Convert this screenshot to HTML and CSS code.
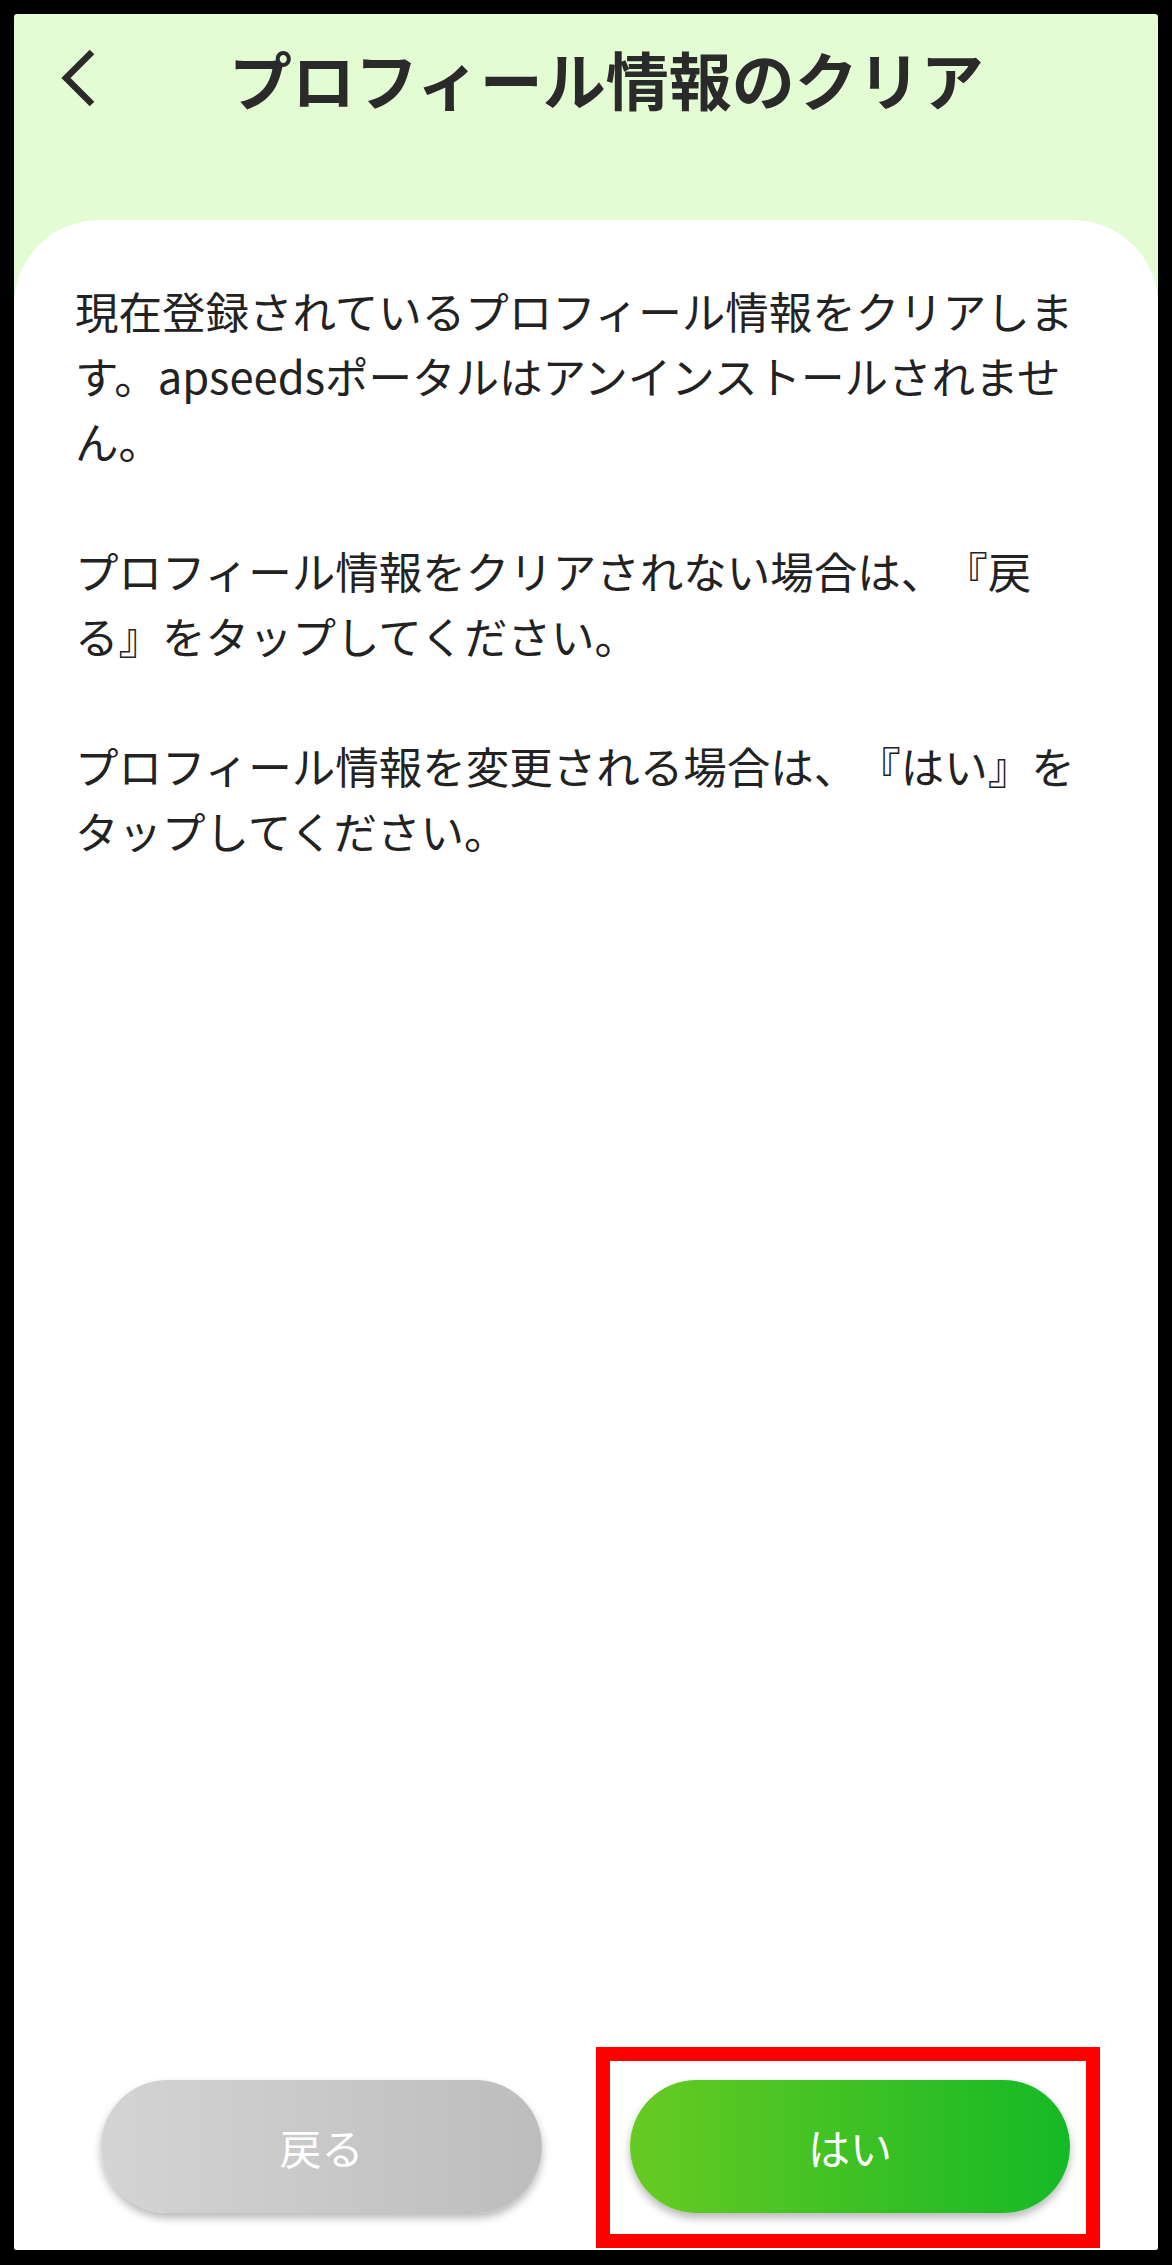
FILE: index.html
```html
<!DOCTYPE html>
<html lang="ja">
<head>
<meta charset="utf-8">
<title>プロフィール情報のクリア</title>
<link rel="stylesheet" href="styles.css">
</head>
<body>
<div class="frame">
  <div class="screen">
    <header class="header">
      <div class="header-row">
        <svg class="back" width="34" height="58" viewBox="0 0 34 58" aria-hidden="true">
          <polyline points="31,3 5,29 31,55" fill="none" stroke="#2a2a2a" stroke-width="6.5" stroke-linejoin="miter"/>
        </svg>
        <h1 class="title">プロフィール情報のクリア</h1>
      </div>
    </header>
    <main class="card">
      <div class="message">
        <p>現在登録されているプロフィール情報をクリアします。apseedsポータルはアンインストールされません。</p>
        <p>プロフィール情報をクリアされない場合は、『戻る』をタップしてください。</p>
        <p>プロフィール情報を変更される場合は、『はい』をタップしてください。</p>
      </div>
      <div class="actions">
        <button class="btn btn-back">戻る</button>
        <div class="highlight">
          <button class="btn btn-yes">はい</button>
        </div>
      </div>
    </main>
  </div>
</div>
</body>
</html>
```

FILE: styles.css
```css
html, body {
  margin: 0;
  padding: 0;
  background: #000;
}

body {
  font-family: "Noto Sans CJK JP", "Noto Sans", sans-serif;
  text-spacing-trim: space-all;
}

.frame {
  width: 1172px;
  height: 2265px;
  box-sizing: border-box;
  padding: 14px 14px 15px 14px;
  background: #000;
  border-radius: 12px;
}

.screen {
  height: 100%;
  display: flex;
  flex-direction: column;
  background: #e3fcd4;
  border-radius: 3px;
  overflow: hidden;
}

.header {
  height: 206px;
  flex: none;
  box-sizing: border-box;
  padding: 19px 0 0 47px;
}

.header-row {
  display: flex;
  align-items: center;
  height: 90px;
}

.back {
  flex: none;
  display: block;
}

.title {
  margin: 0 0 0 134px;
  font-size: 63px;
  line-height: 90px;
  font-weight: 700;
  color: #2a2a2a;
  white-space: nowrap;
}

.card {
  flex: 1;
  display: flex;
  flex-direction: column;
  background: #fff;
  border-radius: 85px 85px 0 0;
}

.message {
  padding: 58px 61px 0 61px;
}

.message p {
  margin: 0 0 65px 0;
  font-size: 43.5px;
  line-height: 65px;
  color: #222;
  text-spacing-trim: space-all;
}

.actions {
  margin-top: auto;
  display: flex;
  align-items: flex-end;
  gap: 54px;
  padding: 0 0 2px 87px;
}

.btn {
  display: flex;
  align-items: center;
  justify-content: center;
  width: 441px;
  height: 133px;
  border: none;
  border-radius: 67px;
  font-family: "Noto Sans CJK JP", "Noto Sans", sans-serif;
  font-size: 42px;
  font-weight: 400;
  color: #fff;
  padding: 0;
  box-shadow: 0 5px 8px rgba(0, 0, 0, 0.28);
}

.btn-back {
  margin-bottom: 35px;
  background: linear-gradient(to right, #d4d4d4, #bdbdbd);
}

.highlight {
  border: 14px solid #ff0000;
  padding: 19px 16px 21px 20px;
  background: #fff;
}

.btn-yes {
  width: 440px;
  background: linear-gradient(to right, #68ca23, #15b926);
}
```
